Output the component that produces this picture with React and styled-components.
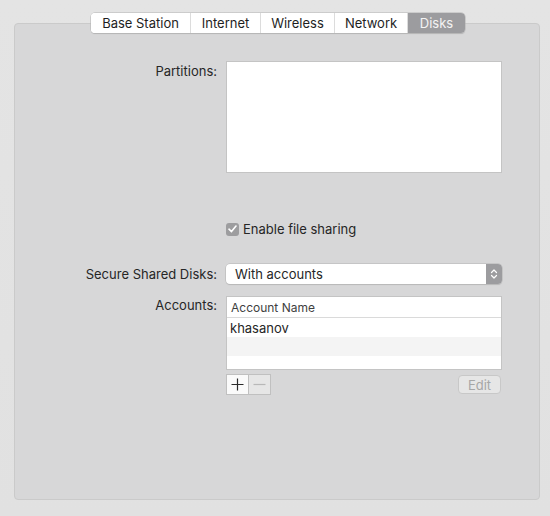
import React from 'react';
import styled, { createGlobalStyle } from 'styled-components';

const GlobalStyle = createGlobalStyle`
    html, body {
        margin: 0;
        padding: 0;
        background: #e3e3e3;
    }
    body {
        font-family: Inter, "Noto Sans", sans-serif;
        font-size: 13px;
        color: #262626;
    }
`;

const Window = styled.div`
    width: 550px;
    height: 516px;
    box-sizing: border-box;
    padding: 23px 10px 16px 14px;
    position: relative;
    background: linear-gradient(#e4e4e4, #e1e1e1);
`;

const Panel = styled.div`
    width: 526px;
    height: 477px;
    box-sizing: border-box;
    background: #d7d7d8;
    border: 1px solid #cacaca;
    border-radius: 4px;
    padding: 37px 38px 0 0;
`;

const TabBar = styled.div`
    position: absolute;
    top: 13px;
    left: 91px;
    display: flex;
    height: 20px;
    border-radius: 4px;
    background: #fff;
    box-shadow: 0 0 0 0.5px #b4b4b4, 0 1px 1px rgba(0, 0, 0, 0.15);
    overflow: hidden;
`;

const Tab = styled.div`
    width: ${(p) => p.w}px;
    box-sizing: border-box;
    display: flex;
    align-items: center;
    justify-content: center;
    font-size: 13px;
    color: ${(p) => (p.active ? '#f4f4f4' : '#1e1e1e')};
    background: ${(p) => (p.active ? '#9c9c9f' : '#fff')};
    border-left: ${(p) => (p.first ? 'none' : '1px solid #dcdcdc')};
`;

const Form = styled.div`
    display: grid;
    grid-template-columns: 202px 276px;
    column-gap: 9px;
    align-items: start;
`;

const Label = styled.div`
    text-align: right;
    padding-top: ${(p) => p.pt || 0}px;
    line-height: 16px;
`;

const TextArea = styled.div`
    height: 112px;
    background: #fff;
    border: 1px solid #c4c4c4;
    box-sizing: border-box;
`;

const Spacer = styled.div`
    height: ${(p) => p.h}px;
`;

const CheckRow = styled.label`
    display: flex;
    align-items: center;
    gap: 4px;
    line-height: 16px;
`;

const CheckBox = styled.span`
    width: 13px;
    height: 13px;
    border-radius: 3px;
    background: #9d9d9f;
    display: flex;
    align-items: center;
    justify-content: center;
`;

const Popup = styled.div`
    height: 20px;
    display: flex;
    align-items: stretch;
    background: #fff;
    border-radius: 4px;
    box-shadow: 0 0 0 0.5px #b4b4b4, 0 1px 1px rgba(0, 0, 0, 0.12);
    overflow: hidden;
`;

const PopupText = styled.div`
    flex: 1;
    display: flex;
    align-items: center;
    padding-left: 9px;
`;

const Stepper = styled.div`
    width: 16px;
    background: #9c9c9f;
    display: flex;
    align-items: center;
    justify-content: center;
`;

const Table = styled.div`
    height: 74px;
    background: #fff;
    border: 1px solid #c4c4c4;
    box-sizing: border-box;
    display: flex;
    flex-direction: column;
    overflow: hidden;
`;

const HeadRow = styled.div`
    flex: none;
    height: 21px;
    border-bottom: 1px solid #dadada;
    display: flex;
    align-items: center;
    padding-left: 4px;
    font-size: 12px;
    color: #3f3f3f;
    box-sizing: border-box;
`;

const Row = styled.div`
    flex: none;
    height: 19px;
    display: flex;
    align-items: center;
    padding-left: 3px;
    background: ${(p) => (p.striped ? '#f4f4f4' : '#fff')};
`;

const ButtonRow = styled.div`
    display: flex;
    align-items: center;
    margin-top: 4px;
`;

const SquareBtn = styled.div`
    width: 21px;
    height: 19px;
    border: 1px solid #c0c0c0;
    margin-left: ${(p) => (p.joined ? '-1px' : '0')};
    background: ${(p) => (p.disabled ? '#e6e6e6' : '#fafafa')};
    display: flex;
    align-items: center;
    justify-content: center;
`;

const EditBtn = styled.div`
    margin-left: auto;
    width: 43px;
    height: 19px;
    box-sizing: border-box;
    border: 1px solid #c8c8c8;
    border-radius: 4px;
    background: #e6e6e6;
    color: #a6a6a6;
    display: flex;
    align-items: center;
    justify-content: center;
    margin-right: 1px;
`;

const tabs = [
    { name: 'Base Station', w: 99 },
    { name: 'Internet', w: 70 },
    { name: 'Wireless', w: 74 },
    { name: 'Network', w: 73 },
    { name: 'Disks', w: 58, active: true },
];

export default function App() {
    return (
        <Window>
            <GlobalStyle />
            <TabBar>
                {tabs.map((t, i) => (
                    <Tab key={t.name} w={t.w} active={t.active} first={i === 0}>
                        {t.name}
                    </Tab>
                ))}
            </TabBar>
            <Panel>
                <Form>
                    <Label pt={2}>Partitions:</Label>
                    <TextArea />

                    <Spacer h={48} />
                    <Spacer h={48} />

                    <div />
                    <CheckRow>
                        <CheckBox>
                            <svg width="9" height="8" viewBox="0 0 9 8">
                                <path d="M1 4.2 L3.5 6.6 L8 1" fill="none" stroke="#fff" strokeWidth="1.6" strokeLinecap="round" strokeLinejoin="round" />
                            </svg>
                        </CheckBox>
                        Enable file sharing
                    </CheckRow>

                    <Spacer h={27} />
                    <Spacer h={27} />

                    <Label pt={2}>Secure Shared Disks:</Label>
                    <Popup>
                        <PopupText>With accounts</PopupText>
                        <Stepper>
                            <svg width="8" height="12" viewBox="0 0 8 12">
                                <path d="M1.5 4.5 L4 2 L6.5 4.5 M1.5 7.5 L4 10 L6.5 7.5" fill="none" stroke="#fff" strokeWidth="1.2" strokeLinecap="round" strokeLinejoin="round" />
                            </svg>
                        </Stepper>
                    </Popup>

                    <Spacer h={12} />
                    <Spacer h={12} />

                    <Label pt={1}>Accounts:</Label>
                    <div>
                        <Table>
                            <HeadRow>Account Name</HeadRow>
                            <Row>khasanov</Row>
                            <Row striped />
                            <Row />
                        </Table>
                        <ButtonRow>
                            <SquareBtn>
                                <svg width="13" height="13" viewBox="0 0 13 13">
                                    <path d="M6.5 0.5 V12.5 M0.5 6.5 H12.5" stroke="#2a2a2a" strokeWidth="1.2" />
                                </svg>
                            </SquareBtn>
                            <SquareBtn joined disabled>
                                <svg width="13" height="13" viewBox="0 0 13 13">
                                    <path d="M0.5 6.5 H12.5" stroke="#b8b8b8" strokeWidth="1.2" />
                                </svg>
                            </SquareBtn>
                            <EditBtn>Edit</EditBtn>
                        </ButtonRow>
                    </div>
                </Form>
            </Panel>
        </Window>
    );
}
